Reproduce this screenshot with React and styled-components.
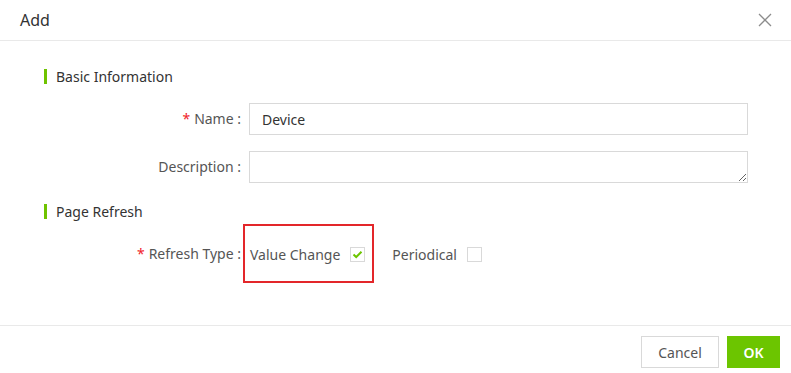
import React, { useState } from 'react'
import styled, { createGlobalStyle } from 'styled-components'

const GlobalStyle = createGlobalStyle`
  html, body {
    margin: 0;
    padding: 0;
    background: #fff;
    font-family: "Noto Sans", "Open Sans", sans-serif;
  }
`

const Dialog = styled.div`
  width: 791px;
  height: 373px;
  display: flex;
  flex-direction: column;
  background: #fff;
  box-sizing: border-box;
`

const Header = styled.div`
  height: 41px;
  box-sizing: border-box;
  display: flex;
  align-items: center;
  justify-content: space-between;
  padding: 0 20px;
  border-bottom: 1px solid #e9e9e9;
`

const Title = styled.div`
  font-size: 16px;
  color: #333;
`

const CloseBtn = styled.button`
  border: none;
  background: none;
  padding: 0;
  width: 16px;
  height: 16px;
  display: flex;
  align-items: center;
  justify-content: center;
  margin-right: -2px;
  cursor: pointer;
`

const Body = styled.div`
  flex: 1;
  padding: 25px 43px 0 44px;
  position: relative;
`

const SectionTitle = styled.div`
  display: flex;
  align-items: center;
  height: 20px;
  font-size: 14px;
  color: #333;
  margin-top: ${p => p.$top}px;
  &::before {
    content: '';
    width: 3px;
    height: 15px;
    background: #6fc300;
    margin-right: 9px;
  }
`

const Row = styled.div`
  display: flex;
  align-items: ${p => (p.$top ? 'flex-start' : 'center')};
  min-height: 32px;
  margin-top: ${p => p.$mt}px;
`

const Label = styled.label`
  width: 205px;
  flex: none;
  text-align: right;
  padding-right: 8px;
  box-sizing: border-box;
  font-size: 14px;
  color: #555;
  line-height: 32px;
`

const Star = styled.span`
  color: #f0232a;
  margin-right: 4px;
`

const Input = styled.input`
  flex: 1;
  height: 32px;
  box-sizing: border-box;
  border: 1px solid #d9d9d9;
  padding: 0 12px;
  font-family: inherit;
  font-size: 14px;
  color: #333;
  outline: none;
`

const TextArea = styled.textarea`
  flex: 1;
  height: 32px;
  box-sizing: border-box;
  border: 1px solid #d9d9d9;
  padding: 4px 12px;
  font-family: inherit;
  font-size: 14px;
  color: #333;
  outline: none;
  resize: vertical;
  display: block;
`

const Options = styled.div`
  display: flex;
  align-items: center;
  padding-left: 1px;
`

const Option = styled.label`
  display: flex;
  align-items: center;
  font-size: 14px;
  color: #555;
  margin-right: 27px;
  cursor: pointer;
`

const Box = styled.span`
  width: 15px;
  height: 15px;
  box-sizing: border-box;
  border: 1px solid #d9d9d9;
  background: #fff;
  margin-left: 10px;
  display: flex;
  align-items: center;
  justify-content: center;
`

const Highlight = styled.div`
  position: absolute;
  left: 243px;
  top: 183px;
  width: 131px;
  height: 59px;
  border: 2px solid #e3262a;
  box-sizing: border-box;
  pointer-events: none;
`

const Footer = styled.div`
  height: 48px;
  box-sizing: border-box;
  flex: none;
  border-top: 1px solid #e9e9e9;
  display: flex;
  justify-content: flex-end;
  align-items: flex-start;
  padding: 10px 11px 0 0;
  gap: 8px;
`

const Button = styled.button`
  height: 32px;
  padding: 0;
  width: ${p => p.$w}px;
  font-family: inherit;
  font-size: 14px;
  border: 1px solid ${p => (p.$primary ? '#6cc500' : '#d9d9d9')};
  background: ${p => (p.$primary ? '#6cc500' : '#fff')};
  color: ${p => (p.$primary ? '#fff' : '#555')};
  font-weight: ${p => (p.$primary ? 600 : 400)};
  cursor: pointer;
`

function Check({ on }) {
  return (
    <Box>
      {on && (
        <svg width="11" height="9" viewBox="0 0 11 9">
          <path d="M1.5 4.5 L4.2 7 L9.5 1.8" fill="none" stroke="#6cc500" strokeWidth="2" />
        </svg>
      )}
    </Box>
  )
}

export default function App() {
  const [type, setType] = useState('value')

  return (
    <>
      <GlobalStyle />
      <Dialog>
        <Header>
          <Title>Add</Title>
          <CloseBtn aria-label="close">
            <svg width="14" height="14" viewBox="0 0 14 14">
              <path d="M1 1 L13 13 M13 1 L1 13" stroke="#8c8c8c" strokeWidth="1.3" />
            </svg>
          </CloseBtn>
        </Header>
        <Body>
          <SectionTitle $top={0}>Basic Information</SectionTitle>
          <Row $mt={17}>
            <Label><Star>*</Star>Name :</Label>
            <Input defaultValue="Device" />
          </Row>
          <Row $mt={16} $top>
            <Label>Description :</Label>
            <TextArea />
          </Row>
          <SectionTitle $top={18}>Page Refresh</SectionTitle>
          <Row $mt={17}>
            <Label><Star>*</Star>Refresh Type :</Label>
            <Options>
              <Option onClick={() => setType('value')}>
                Value Change
                <Check on={type === 'value'} />
              </Option>
              <Option onClick={() => setType('periodical')}>
                Periodical
                <Check on={type === 'periodical'} />
              </Option>
            </Options>
          </Row>
          <Highlight />
        </Body>
        <Footer>
          <Button $w={78}>Cancel</Button>
          <Button $w={53} $primary>OK</Button>
        </Footer>
      </Dialog>
    </>
  )
}
